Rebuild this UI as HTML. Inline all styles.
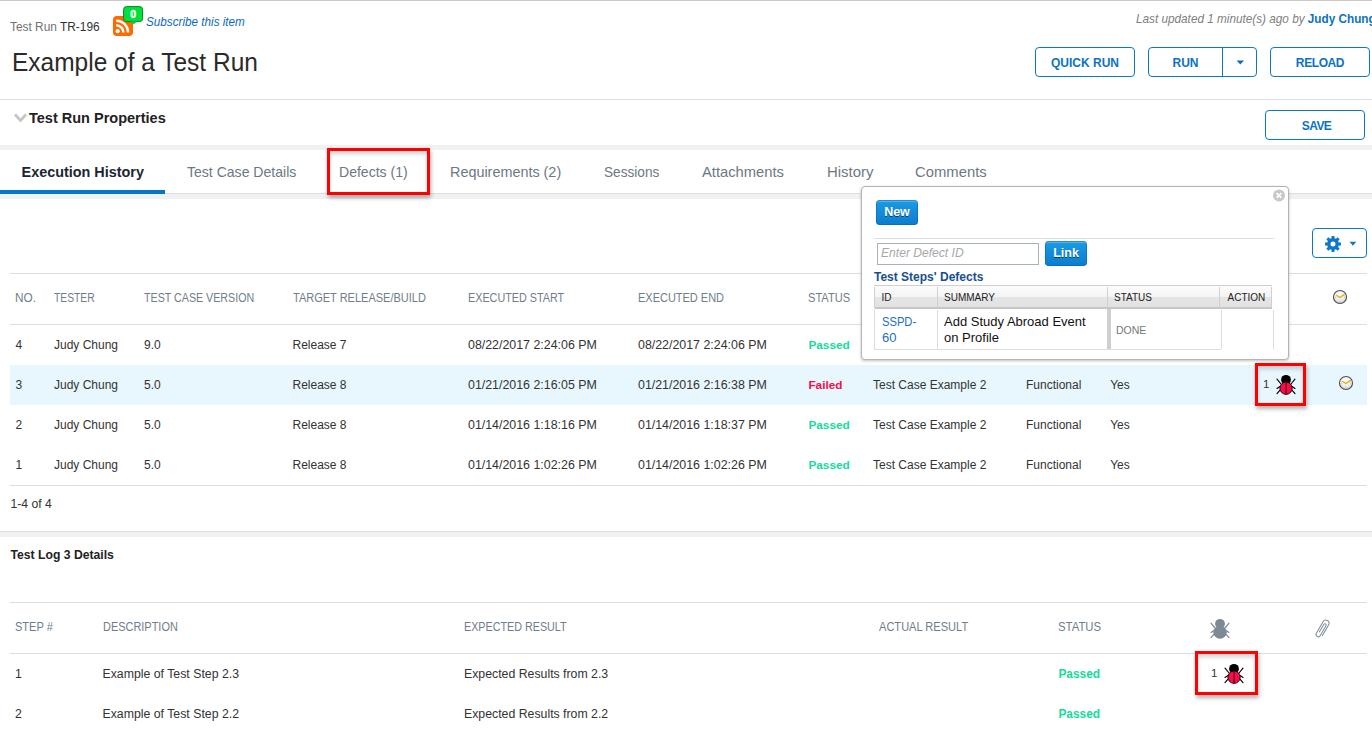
<!DOCTYPE html>
<html><head><meta charset="utf-8"><title>Test Run</title>
<style>
html,body{margin:0;padding:0;background:#fff;width:1372px;height:742px;overflow:hidden;position:relative}
body{font-family:"Liberation Sans",sans-serif}
.t{position:absolute;white-space:nowrap;font-family:"Liberation Sans",sans-serif}
svg{overflow:visible}
</style></head><body>
<div style="position:absolute;left:0px;top:0px;width:1372px;height:1px;background:#c9c9c9"></div>
<div class="t" style="left:10px;top:22px;font-size:11.9px;line-height:11.9px;color:#333;font-weight:normal;font-style:normal;"><span style="color:#727272">Test Run </span>TR-196</div>
<svg style="position:absolute;left:113px;top:6px" width="32" height="31" viewBox="0 0 32 31">
<rect x="0" y="10" width="20" height="20" rx="4" fill="#ff6a00"/>
<circle cx="4.7" cy="25.2" r="2.1" fill="#fff"/>
<path d="M3.2 19.3 A7.2 7.2 0 0 1 10.4 26.6" stroke="#fff" stroke-width="2.5" fill="none"/>
<path d="M3.2 14.7 A11.8 11.8 0 0 1 15 26.6" stroke="#fff" stroke-width="2.5" fill="none"/>
<rect x="10.6" y="0.6" width="19" height="15" rx="3" fill="#00e03c" stroke="#008a1c" stroke-width="1"/>
<path d="M17 15.5 L20.5 18.5 L24 15.5 Z" fill="#00d638"/>
<text x="20.1" y="12.2" font-family="Liberation Sans" font-weight="bold" font-size="10.5" fill="#fff" stroke="#fff" stroke-width="0.45" text-anchor="middle">0</text>
</svg>
<div class="t" style="left:146px;top:15px;font-size:13px;line-height:13px;color:#0b6bc0;font-weight:normal;font-style:italic;transform:scaleX(0.9);transform-origin:0 0">Subscribe this item</div>
<div class="t" style="left:1135.6px;top:12px;font-size:13px;line-height:13px;color:#808080;font-weight:normal;font-style:italic;white-space:nowrap;transform:scaleX(0.904);transform-origin:0 0">Last updated 1 minute(s) ago by <b style="color:#0b72c4;font-style:normal">Judy Chung</b></div>
<div class="t" style="left:12px;top:50px;font-size:25.2px;line-height:25.2px;color:#2a2a2a;font-weight:normal;font-style:normal;transform:scaleX(0.972);transform-origin:0 0">Example of a Test Run</div>
<div style="position:absolute;left:1035px;top:47px;width:98px;height:28px;border:1px solid #0b78c9;border-radius:4px;background:#fff"></div>
<div class="t" style="left:1035px;top:48px;width:100px;height:30px;line-height:30px;text-align:center;font-size:12px;font-weight:bold;color:#0b72c6;letter-spacing:0px">QUICK RUN</div>
<div style="position:absolute;left:1148px;top:47px;width:107px;height:28px;border:1px solid #0b78c9;border-radius:4px;background:#fff"></div>
<div class="t" style="left:1148px;top:48px;width:75px;height:30px;line-height:30px;text-align:center;font-size:12px;font-weight:bold;color:#0b72c6">RUN</div>
<div style="position:absolute;left:1222px;top:47px;width:1px;height:30px;background:#0b78c9"></div>
<svg style="position:absolute;left:1236px;top:60px" width="9" height="5"><path d="M0.5 0.5 L8 0.5 L4.25 4.5 Z" fill="#0b6fbf"/></svg>
<div style="position:absolute;left:1270px;top:47px;width:98px;height:28px;border:1px solid #0b78c9;border-radius:4px;background:#fff"></div>
<div class="t" style="left:1270px;top:48px;width:100px;height:30px;line-height:30px;text-align:center;font-size:12px;font-weight:bold;color:#0b72c6;letter-spacing:-0.4px">RELOAD</div>
<div style="position:absolute;left:0px;top:99px;width:1372px;height:1px;background:#d8dfe6"></div>
<svg style="position:absolute;left:13px;top:112px" width="16" height="12"><path d="M2 2.5 L7.5 8.5 L13 2.5" stroke="#c6c6c6" stroke-width="2.8" fill="none"/></svg>
<div class="t" style="left:29px;top:111px;font-size:14.5px;line-height:14.5px;color:#222;font-weight:bold;font-style:normal;">Test Run Properties</div>
<div style="position:absolute;left:1265px;top:110px;width:98px;height:28px;border:1px solid #0b78c9;border-radius:4px;background:#fff"></div>
<div class="t" style="left:1266.5px;top:111px;width:100px;height:30px;line-height:30px;text-align:center;font-size:12px;font-weight:bold;color:#0b72c6;letter-spacing:-0.6px">SAVE</div>
<div style="position:absolute;left:0px;top:145px;width:1372px;height:5px;background:#f1f1f1"></div>
<div style="position:absolute;left:0px;top:193px;width:1372px;height:1px;background:#d8dfe6"></div>
<div style="position:absolute;left:0px;top:190px;width:165px;height:4px;background:#0077c8"></div>
<div style="position:absolute;left:0px;top:194px;width:1372px;height:5px;background:#f1f1f1"></div>
<div class="t" style="left:21.6px;top:165px;font-size:14.4px;line-height:14.4px;color:#1b2530;font-weight:bold;font-style:normal;">Execution History</div>
<div class="t" style="left:187.0px;top:165px;font-size:14.4px;line-height:14.4px;color:#6d7884;font-weight:normal;font-style:normal;transform:scaleX(0.976);transform-origin:0 0">Test Case Details</div>
<div class="t" style="left:339.0px;top:165px;font-size:14.4px;line-height:14.4px;color:#6d7884;font-weight:normal;font-style:normal;transform:scaleX(0.976);transform-origin:0 0">Defects (1)</div>
<div class="t" style="left:450.0px;top:165px;font-size:14.4px;line-height:14.4px;color:#6d7884;font-weight:normal;font-style:normal;transform:scaleX(1.000);transform-origin:0 0">Requirements (2)</div>
<div class="t" style="left:603.7px;top:165px;font-size:14.4px;line-height:14.4px;color:#6d7884;font-weight:normal;font-style:normal;transform:scaleX(0.947);transform-origin:0 0">Sessions</div>
<div class="t" style="left:702.0px;top:165px;font-size:14.4px;line-height:14.4px;color:#6d7884;font-weight:normal;font-style:normal;transform:scaleX(1.025);transform-origin:0 0">Attachments</div>
<div class="t" style="left:826.8px;top:165px;font-size:14.4px;line-height:14.4px;color:#6d7884;font-weight:normal;font-style:normal;transform:scaleX(1.038);transform-origin:0 0">History</div>
<div class="t" style="left:915.0px;top:165px;font-size:14.4px;line-height:14.4px;color:#6d7884;font-weight:normal;font-style:normal;transform:scaleX(1.030);transform-origin:0 0">Comments</div>
<div style="position:absolute;left:327px;top:148px;width:103px;height:47px;box-sizing:border-box;border:3px solid #ff0000;box-shadow:1px 3px 4px rgba(0,0,0,0.3), inset 0 3px 4px rgba(0,0,0,0.18)"></div>
<div style="position:absolute;left:10px;top:273px;width:1357px;height:1px;background:#d8dfe6"></div>
<div style="position:absolute;left:10px;top:324px;width:1357px;height:1px;background:#d8dfe6"></div>
<div style="position:absolute;left:10px;top:365px;width:1357px;height:40px;background:#e8f7fd"></div>
<div style="position:absolute;left:10px;top:485px;width:1357px;height:1px;background:#d8dfe6"></div>
<div class="t" style="left:15.4px;top:292px;font-size:12px;line-height:12px;color:#717d8a;font-weight:normal;font-style:normal;transform:scaleX(0.986);transform-origin:0 0">NO.</div>
<div class="t" style="left:54px;top:292px;font-size:12px;line-height:12px;color:#717d8a;font-weight:normal;font-style:normal;transform:scaleX(0.858);transform-origin:0 0">TESTER</div>
<div class="t" style="left:144px;top:292px;font-size:12px;line-height:12px;color:#717d8a;font-weight:normal;font-style:normal;transform:scaleX(0.890);transform-origin:0 0">TEST CASE VERSION</div>
<div class="t" style="left:292.5px;top:292px;font-size:12px;line-height:12px;color:#717d8a;font-weight:normal;font-style:normal;transform:scaleX(0.917);transform-origin:0 0">TARGET RELEASE/BUILD</div>
<div class="t" style="left:468px;top:292px;font-size:12px;line-height:12px;color:#717d8a;font-weight:normal;font-style:normal;transform:scaleX(0.899);transform-origin:0 0">EXECUTED START</div>
<div class="t" style="left:638px;top:292px;font-size:12px;line-height:12px;color:#717d8a;font-weight:normal;font-style:normal;transform:scaleX(0.915);transform-origin:0 0">EXECUTED END</div>
<div class="t" style="left:808.4px;top:292px;font-size:12px;line-height:12px;color:#717d8a;font-weight:normal;font-style:normal;transform:scaleX(0.923);transform-origin:0 0">STATUS</div>
<div class="t" style="left:15.4px;top:339px;font-size:12px;line-height:12px;color:#333;font-weight:normal;font-style:normal;">4</div>
<div class="t" style="left:54px;top:339px;font-size:12px;line-height:12px;color:#333;font-weight:normal;font-style:normal;">Judy Chung</div>
<div class="t" style="left:144px;top:339px;font-size:12px;line-height:12px;color:#333;font-weight:normal;font-style:normal;">9.0</div>
<div class="t" style="left:292.5px;top:339px;font-size:12px;line-height:12px;color:#333;font-weight:normal;font-style:normal;">Release 7</div>
<div class="t" style="left:468px;top:339px;font-size:12.4px;line-height:12.4px;color:#333;font-weight:normal;font-style:normal;">08/22/2017 2:24:06 PM</div>
<div class="t" style="left:638px;top:339px;font-size:12.4px;line-height:12.4px;color:#333;font-weight:normal;font-style:normal;">08/22/2017 2:24:06 PM</div>
<div class="t" style="left:808.4px;top:340px;font-size:11.8px;line-height:11.8px;color:#12dc9a;font-weight:bold;font-style:normal;">Passed</div>
<div class="t" style="left:15.4px;top:379px;font-size:12px;line-height:12px;color:#333;font-weight:normal;font-style:normal;">3</div>
<div class="t" style="left:54px;top:379px;font-size:12px;line-height:12px;color:#333;font-weight:normal;font-style:normal;">Judy Chung</div>
<div class="t" style="left:144px;top:379px;font-size:12px;line-height:12px;color:#333;font-weight:normal;font-style:normal;">5.0</div>
<div class="t" style="left:292.5px;top:379px;font-size:12px;line-height:12px;color:#333;font-weight:normal;font-style:normal;">Release 8</div>
<div class="t" style="left:468px;top:379px;font-size:12.4px;line-height:12.4px;color:#333;font-weight:normal;font-style:normal;">01/21/2016 2:16:05 PM</div>
<div class="t" style="left:638px;top:379px;font-size:12.4px;line-height:12.4px;color:#333;font-weight:normal;font-style:normal;">01/21/2016 2:16:38 PM</div>
<div class="t" style="left:808.4px;top:380px;font-size:11.8px;line-height:11.8px;color:#fb0a48;font-weight:bold;font-style:normal;">Failed</div>
<div class="t" style="left:873px;top:379px;font-size:12px;line-height:12px;color:#333;font-weight:normal;font-style:normal;">Test Case Example 2</div>
<div class="t" style="left:1026px;top:379px;font-size:12px;line-height:12px;color:#333;font-weight:normal;font-style:normal;">Functional</div>
<div class="t" style="left:1110.2px;top:379px;font-size:12px;line-height:12px;color:#333;font-weight:normal;font-style:normal;">Yes</div>
<div class="t" style="left:15.4px;top:419px;font-size:12px;line-height:12px;color:#333;font-weight:normal;font-style:normal;">2</div>
<div class="t" style="left:54px;top:419px;font-size:12px;line-height:12px;color:#333;font-weight:normal;font-style:normal;">Judy Chung</div>
<div class="t" style="left:144px;top:419px;font-size:12px;line-height:12px;color:#333;font-weight:normal;font-style:normal;">5.0</div>
<div class="t" style="left:292.5px;top:419px;font-size:12px;line-height:12px;color:#333;font-weight:normal;font-style:normal;">Release 8</div>
<div class="t" style="left:468px;top:419px;font-size:12.4px;line-height:12.4px;color:#333;font-weight:normal;font-style:normal;">01/14/2016 1:18:16 PM</div>
<div class="t" style="left:638px;top:419px;font-size:12.4px;line-height:12.4px;color:#333;font-weight:normal;font-style:normal;">01/14/2016 1:18:37 PM</div>
<div class="t" style="left:808.4px;top:420px;font-size:11.8px;line-height:11.8px;color:#12dc9a;font-weight:bold;font-style:normal;">Passed</div>
<div class="t" style="left:873px;top:419px;font-size:12px;line-height:12px;color:#333;font-weight:normal;font-style:normal;">Test Case Example 2</div>
<div class="t" style="left:1026px;top:419px;font-size:12px;line-height:12px;color:#333;font-weight:normal;font-style:normal;">Functional</div>
<div class="t" style="left:1110.2px;top:419px;font-size:12px;line-height:12px;color:#333;font-weight:normal;font-style:normal;">Yes</div>
<div class="t" style="left:15.4px;top:459px;font-size:12px;line-height:12px;color:#333;font-weight:normal;font-style:normal;">1</div>
<div class="t" style="left:54px;top:459px;font-size:12px;line-height:12px;color:#333;font-weight:normal;font-style:normal;">Judy Chung</div>
<div class="t" style="left:144px;top:459px;font-size:12px;line-height:12px;color:#333;font-weight:normal;font-style:normal;">5.0</div>
<div class="t" style="left:292.5px;top:459px;font-size:12px;line-height:12px;color:#333;font-weight:normal;font-style:normal;">Release 8</div>
<div class="t" style="left:468px;top:459px;font-size:12.4px;line-height:12.4px;color:#333;font-weight:normal;font-style:normal;">01/14/2016 1:02:26 PM</div>
<div class="t" style="left:638px;top:459px;font-size:12.4px;line-height:12.4px;color:#333;font-weight:normal;font-style:normal;">01/14/2016 1:02:26 PM</div>
<div class="t" style="left:808.4px;top:460px;font-size:11.8px;line-height:11.8px;color:#12dc9a;font-weight:bold;font-style:normal;">Passed</div>
<div class="t" style="left:873px;top:459px;font-size:12px;line-height:12px;color:#333;font-weight:normal;font-style:normal;">Test Case Example 2</div>
<div class="t" style="left:1026px;top:459px;font-size:12px;line-height:12px;color:#333;font-weight:normal;font-style:normal;">Functional</div>
<div class="t" style="left:1110.2px;top:459px;font-size:12px;line-height:12px;color:#333;font-weight:normal;font-style:normal;">Yes</div>
<div class="t" style="left:10.5px;top:498px;font-size:12.2px;line-height:12.2px;color:#333;font-weight:normal;font-style:normal;">1-4 of 4</div>
<div style="position:absolute;left:0px;top:531px;width:1372px;height:1px;background:#d8dfe6"></div>
<div style="position:absolute;left:0px;top:532px;width:1372px;height:5px;background:#f1f1f1"></div>
<div class="t" style="left:10.5px;top:549px;font-size:12.2px;line-height:12.2px;color:#222;font-weight:bold;font-style:normal;">Test Log 3 Details</div>
<div style="position:absolute;left:10px;top:602px;width:1357px;height:1px;background:#d8dfe6"></div>
<div style="position:absolute;left:10px;top:653px;width:1357px;height:1px;background:#d8dfe6"></div>
<div class="t" style="left:15px;top:621px;font-size:12px;line-height:12px;color:#717d8a;font-weight:normal;font-style:normal;transform:scaleX(0.920);transform-origin:0 0">STEP #</div>
<div class="t" style="left:102.5px;top:621px;font-size:12px;line-height:12px;color:#717d8a;font-weight:normal;font-style:normal;transform:scaleX(0.912);transform-origin:0 0">DESCRIPTION</div>
<div class="t" style="left:464px;top:621px;font-size:12px;line-height:12px;color:#717d8a;font-weight:normal;font-style:normal;transform:scaleX(0.896);transform-origin:0 0">EXPECTED RESULT</div>
<div class="t" style="left:878.5px;top:621px;font-size:12px;line-height:12px;color:#717d8a;font-weight:normal;font-style:normal;transform:scaleX(0.922);transform-origin:0 0">ACTUAL RESULT</div>
<div class="t" style="left:1058.4px;top:621px;font-size:12px;line-height:12px;color:#717d8a;font-weight:normal;font-style:normal;transform:scaleX(0.947);transform-origin:0 0">STATUS</div>
<div class="t" style="left:15px;top:668px;font-size:12.3px;line-height:12.3px;color:#333;font-weight:normal;font-style:normal;">1</div>
<div class="t" style="left:102.5px;top:668px;font-size:12.3px;line-height:12.3px;color:#333;font-weight:normal;font-style:normal;">Example of Test Step 2.3</div>
<div class="t" style="left:464px;top:668px;font-size:12.3px;line-height:12.3px;color:#333;font-weight:normal;font-style:normal;">Expected Results from 2.3</div>
<div class="t" style="left:1058.4px;top:669px;font-size:11.9px;line-height:11.9px;color:#12dc9a;font-weight:bold;font-style:normal;">Passed</div>
<div class="t" style="left:15px;top:708px;font-size:12.3px;line-height:12.3px;color:#333;font-weight:normal;font-style:normal;">2</div>
<div class="t" style="left:102.5px;top:708px;font-size:12.3px;line-height:12.3px;color:#333;font-weight:normal;font-style:normal;">Example of Test Step 2.2</div>
<div class="t" style="left:464px;top:708px;font-size:12.3px;line-height:12.3px;color:#333;font-weight:normal;font-style:normal;">Expected Results from 2.2</div>
<div class="t" style="left:1058.4px;top:709px;font-size:11.9px;line-height:11.9px;color:#12dc9a;font-weight:bold;font-style:normal;">Passed</div>
<svg style="position:absolute;left:1332px;top:289px" width="16" height="16" viewBox="0 0 16 16">
<defs><radialGradient id="cg1" cx="50%" cy="30%" r="75%"><stop offset="0" stop-color="#ffffff"/><stop offset="0.6" stop-color="#ececec"/><stop offset="1" stop-color="#c4c4c4"/></radialGradient></defs>
<circle cx="8" cy="8" r="6.55" fill="url(#cg1)" stroke="#505050" stroke-width="1.1"/>
<path d="M8 13 L8 12.2 M3 8.2 L3.8 8.2 M12.2 8.2 L13 8.2" stroke="#aaa" stroke-width="0.8"/>
<path d="M4.7 6.5 L7.9 8.5 L12.2 5.6" stroke="#e6b000" stroke-width="1.4" fill="none" stroke-linecap="round" stroke-linejoin="round"/>
</svg>
<svg style="position:absolute;left:1337.5px;top:375px" width="16" height="16" viewBox="0 0 16 16">
<defs><radialGradient id="cg2" cx="50%" cy="30%" r="75%"><stop offset="0" stop-color="#ffffff"/><stop offset="0.6" stop-color="#ececec"/><stop offset="1" stop-color="#c4c4c4"/></radialGradient></defs>
<circle cx="8" cy="8" r="6.55" fill="url(#cg2)" stroke="#505050" stroke-width="1.1"/>
<path d="M8 13 L8 12.2 M3 8.2 L3.8 8.2 M12.2 8.2 L13 8.2" stroke="#aaa" stroke-width="0.8"/>
<path d="M4.7 6.5 L7.9 8.5 L12.2 5.6" stroke="#e6b000" stroke-width="1.4" fill="none" stroke-linecap="round" stroke-linejoin="round"/>
</svg>
<div style="position:absolute;left:1255px;top:363px;width:51px;height:43px;box-sizing:border-box;border:3px solid #ff0000;box-shadow:1px 3px 4px rgba(0,0,0,0.3), inset 0 3px 4px rgba(0,0,0,0.18)"></div>
<div class="t" style="left:1263px;top:379px;font-size:11.5px;line-height:11.5px;color:#333;font-weight:normal;font-style:normal;">1</div>
<svg style="position:absolute;left:1272px;top:370px" width="28" height="28" viewBox="0 0 28 28">
<g stroke="#000" stroke-width="1.15" stroke-linecap="round" fill="none">
<path d="M5 9.2 L9 14"/><path d="M23 9.2 L19 14"/>
<path d="M5 18.5 L8 16.5"/><path d="M23 18.5 L20 16.5"/>
<path d="M5 23.6 L8 20.2"/><path d="M23 23.6 L20 20.2"/>
</g>
<circle cx="14" cy="9.8" r="4.9" fill="#000"/>
<ellipse cx="14.05" cy="18.2" rx="6.1" ry="6.2" fill="#ff0a47" stroke="#000" stroke-width="0.9"/>
<path d="M14.1 12.2 L14.1 24" stroke="#78001f" stroke-width="1.5"/>
</svg>
<svg style="position:absolute;left:1206px;top:614px" width="28" height="28" viewBox="0 0 28 28">
<g stroke="#7d8a95" stroke-width="1.2" stroke-linecap="round" fill="none">
<path d="M5 9.2 L9 14"/><path d="M23 9.2 L19 14"/>
<path d="M5 18.5 L8 16.5"/><path d="M23 18.5 L20 16.5"/>
<path d="M5 23.6 L8 20.2"/><path d="M23 23.6 L20 20.2"/>
</g>
<circle cx="14" cy="9.8" r="4.9" fill="#7d8a95"/>
<ellipse cx="14.05" cy="18.3" rx="6.7" ry="6.4" fill="#7d8a95"/>
</svg>
<svg style="position:absolute;left:1310px;top:615px" width="26" height="26" viewBox="0 0 26 26">
<g transform="translate(12.5 14) rotate(30) translate(-3.2 -9.8)" fill="none" stroke="#7d8a95" stroke-width="1" stroke-linecap="round">
<path d="M6.4 15.5 L6.4 3.2 A3.2 3.2 0 0 0 0 3.2 L0 16.6 A2.3 2.3 0 0 0 4.6 16.6 L4.6 5.2 A1.3 1.3 0 0 0 2.0 5.2 L2.0 13.8"/>
</g></svg>
<div style="position:absolute;left:1195px;top:651px;width:63px;height:44px;box-sizing:border-box;border:3px solid #ff0000;box-shadow:1px 3px 4px rgba(0,0,0,0.3), inset 0 3px 4px rgba(0,0,0,0.18)"></div>
<div class="t" style="left:1211px;top:668px;font-size:11.5px;line-height:11.5px;color:#333;font-weight:normal;font-style:normal;">1</div>
<svg style="position:absolute;left:1220px;top:659px" width="28" height="28" viewBox="0 0 28 28">
<g stroke="#000" stroke-width="1.15" stroke-linecap="round" fill="none">
<path d="M5 9.2 L9 14"/><path d="M23 9.2 L19 14"/>
<path d="M5 18.5 L8 16.5"/><path d="M23 18.5 L20 16.5"/>
<path d="M5 23.6 L8 20.2"/><path d="M23 23.6 L20 20.2"/>
</g>
<circle cx="14" cy="9.8" r="4.9" fill="#000"/>
<ellipse cx="14.05" cy="18.2" rx="6.1" ry="6.2" fill="#ff0a47" stroke="#000" stroke-width="0.9"/>
<path d="M14.1 12.2 L14.1 24" stroke="#78001f" stroke-width="1.5"/>
</svg>
<div style="position:absolute;left:1312px;top:228px;width:53px;height:28px;border:1px solid #0b78c9;border-radius:4px;background:#fff"></div>
<svg style="position:absolute;left:1324px;top:235px" width="18" height="18"><path d="M14.68 7.41 L16.98 7.59 L16.98 10.41 L14.68 10.59 L14.14 11.89 L15.64 13.64 L13.64 15.64 L11.89 14.14 L10.59 14.68 L10.41 16.98 L7.59 16.98 L7.41 14.68 L6.11 14.14 L4.36 15.64 L2.36 13.64 L3.86 11.89 L3.32 10.59 L1.02 10.41 L1.02 7.59 L3.32 7.41 L3.86 6.11 L2.36 4.36 L4.36 2.36 L6.11 3.86 L7.41 3.32 L7.59 1.02 L10.41 1.02 L10.59 3.32 L11.89 3.86 L13.64 2.36 L15.64 4.36 L14.14 6.11 Z M11.5 9 A2.5 2.5 0 1 0 6.5 9 A2.5 2.5 0 1 0 11.5 9 Z" fill="#0b78c9" fill-rule="evenodd"/></svg>
<svg style="position:absolute;left:1349px;top:241px" width="8" height="5"><path d="M0.5 0.8 L7.3 0.8 L3.9 4.8 Z" fill="#0b78c9"/></svg>
<div id="pop" style="position:absolute;left:861px;top:186px;width:426px;height:172px;border:1px solid #b4b4b4;border-radius:4px;background:#fff;box-shadow:0 1px 3px rgba(0,0,0,0.25)"></div>
<svg style="position:absolute;left:1272px;top:188px" width="14" height="14"><circle cx="7" cy="7.5" r="6" fill="#c8c8c8"/><path d="M4.6 5.1 L9.4 9.9 M9.4 5.1 L4.6 9.9" stroke="#fff" stroke-width="1.5"/></svg>
<div class="t" style="left:876px;top:200px;width:42px;height:25px;line-height:25px;text-align:center;font-size:12.5px;font-weight:bold;color:#fff;text-shadow:0 1px 0 rgba(0,0,0,0.55);border-radius:4px;background:linear-gradient(#1b9be6,#0a7dcc);box-shadow:inset 0 0 0 1px rgba(0,100,180,0.5), inset 0 2px 0 rgba(255,255,255,0.25)">New</div>
<div style="position:absolute;left:874px;top:238px;width:400px;height:1px;background:#d9e0e8"></div>
<div style="position:absolute;left:877px;top:243px;width:160px;height:20px;border:1px solid #a9b3c0;background:#fff"></div>
<div class="t" style="left:881px;top:247px;font-size:12.1px;line-height:12.1px;color:#a8a8a8;font-weight:normal;font-style:italic;">Enter Defect ID</div>
<div class="t" style="left:1045px;top:241px;width:42px;height:25px;line-height:25px;text-align:center;font-size:12.5px;font-weight:bold;color:#fff;text-shadow:0 1px 0 rgba(0,0,0,0.55);border-radius:4px;background:linear-gradient(#1b9be6,#0a7dcc);box-shadow:inset 0 0 0 1px rgba(0,100,180,0.5), inset 0 2px 0 rgba(255,255,255,0.25)">Link</div>
<div class="t" style="left:874px;top:271px;font-size:12px;line-height:12px;color:#174e92;font-weight:bold;font-style:normal;">Test Steps' Defects</div>
<div style="position:absolute;left:874px;top:285px;width:398px;height:1px;background:#d0d0d0"></div>
<div style="position:absolute;left:875px;top:286px;width:397px;height:21px;background:linear-gradient(#fcfcfc 0%,#f4f4f4 52%,#e5e5e5 54%,#e2e2e2 100%);border-bottom:2px solid #c6c6c6"></div>
<div style="position:absolute;left:874px;top:287px;width:1px;height:21px;background:#d0d0d0"></div>
<div style="position:absolute;left:937px;top:287px;width:1px;height:21px;background:#d0d0d0"></div>
<div style="position:absolute;left:1107px;top:287px;width:1px;height:21px;background:#d0d0d0"></div>
<div style="position:absolute;left:1219px;top:287px;width:1px;height:21px;background:#d0d0d0"></div>
<div style="position:absolute;left:1271px;top:287px;width:1px;height:21px;background:#d0d0d0"></div>
<div class="t" style="left:881.5px;top:293px;font-size:10px;line-height:10px;color:#222;font-weight:normal;font-style:normal;">ID</div>
<div class="t" style="left:944px;top:293px;font-size:10px;line-height:10px;color:#222;font-weight:normal;font-style:normal;">SUMMARY</div>
<div class="t" style="left:1114px;top:293px;font-size:10px;line-height:10px;color:#222;font-weight:normal;font-style:normal;">STATUS</div>
<div class="t" style="left:1227.5px;top:293px;font-size:10px;line-height:10px;color:#222;font-weight:normal;font-style:normal;">ACTION</div>
<div style="position:absolute;left:874px;top:309px;width:1px;height:41px;background:#ddd"></div>
<div style="position:absolute;left:937px;top:310px;width:1px;height:39px;background:#ddd"></div>
<div style="position:absolute;left:1107px;top:309px;width:4px;height:40px;background:#cfcfcf"></div>
<div style="position:absolute;left:1221px;top:310px;width:1px;height:39px;background:#ddd"></div>
<div style="position:absolute;left:1273px;top:310px;width:1px;height:39px;background:#ddd"></div>
<div style="position:absolute;left:875px;top:349px;width:346px;height:1px;background:#ddd"></div>
<div class="t" style="left:882px;top:315px;font-size:13px;line-height:13px;color:#1b6ec2;font-weight:normal;font-style:normal;transform:scaleX(0.86);transform-origin:0 0">SSPD-</div>
<div class="t" style="left:882px;top:331px;font-size:13px;line-height:13px;color:#1b6ec2;font-weight:normal;font-style:normal;">60</div>
<div class="t" style="left:944px;top:315px;font-size:13px;line-height:13px;color:#111;font-weight:normal;font-style:normal;">Add Study Abroad Event</div>
<div class="t" style="left:944px;top:331px;font-size:13px;line-height:13px;color:#111;font-weight:normal;font-style:normal;">on Profile</div>
<div class="t" style="left:1116px;top:325px;font-size:10.5px;line-height:10.5px;color:#777;font-weight:normal;font-style:normal;">DONE</div>
</body></html>
